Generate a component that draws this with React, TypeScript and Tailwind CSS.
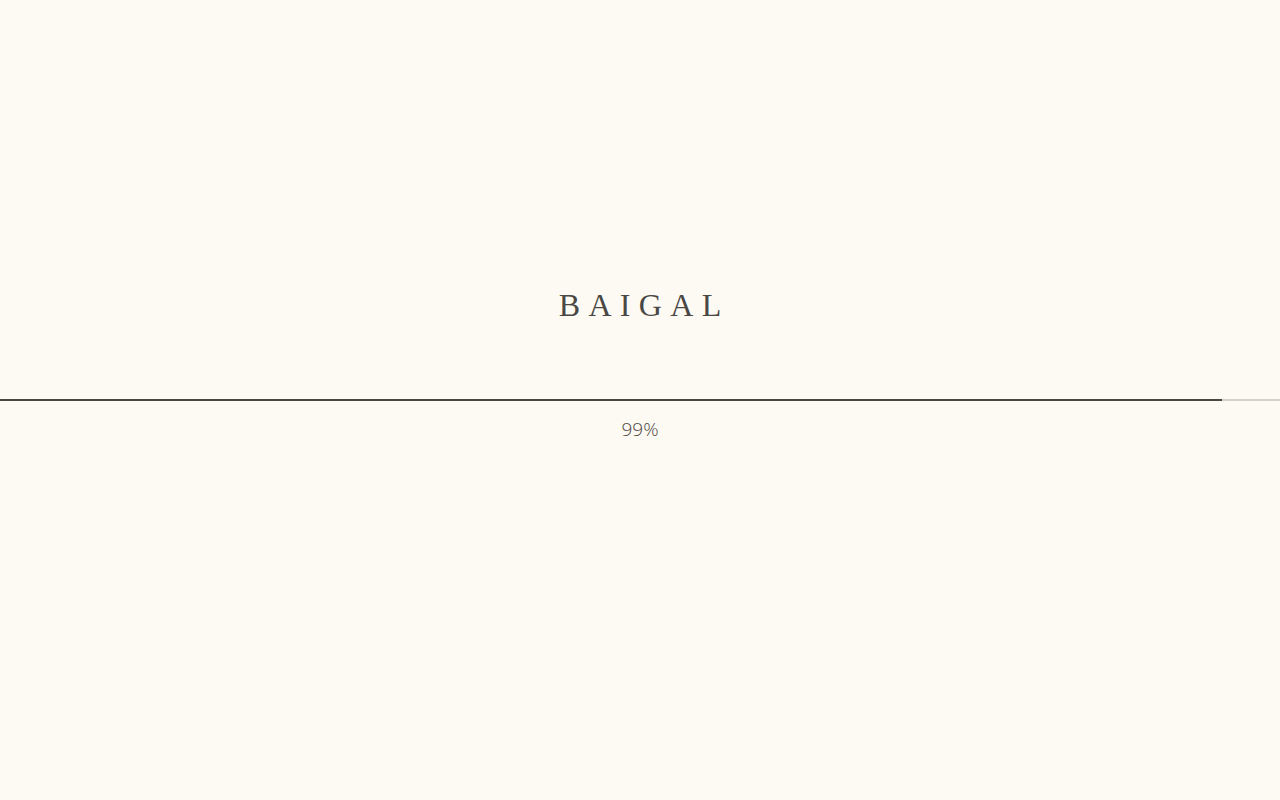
export default function App() {
  const progress = 99;
  return (
    <div className="grid h-screen w-full grid-rows-[1fr_auto_1fr] bg-[#fdfaf3]">
      <div className="flex items-end justify-center">
        <h1 className="mb-[78px] pl-[0.26em] text-[32px] leading-none tracking-[0.26em] text-[#4a4845] [font-family:'Liberation_Serif',serif]">
          BAIGAL
        </h1>
      </div>
      <div className="h-[2px] w-full bg-[#d6d1c7]">
        <div className="h-[2px] bg-[#4a463f]" style={{ width: `${(1222 / 1280) * 100}%` }} data-progress={progress} />
      </div>
      <div className="flex items-start justify-center">
        <p className="mt-[14px] text-[19px] font-light leading-7 text-[#4b4741] [font-family:'Open_Sans',sans-serif]">
          {progress}%
        </p>
      </div>
    </div>
  );
}
